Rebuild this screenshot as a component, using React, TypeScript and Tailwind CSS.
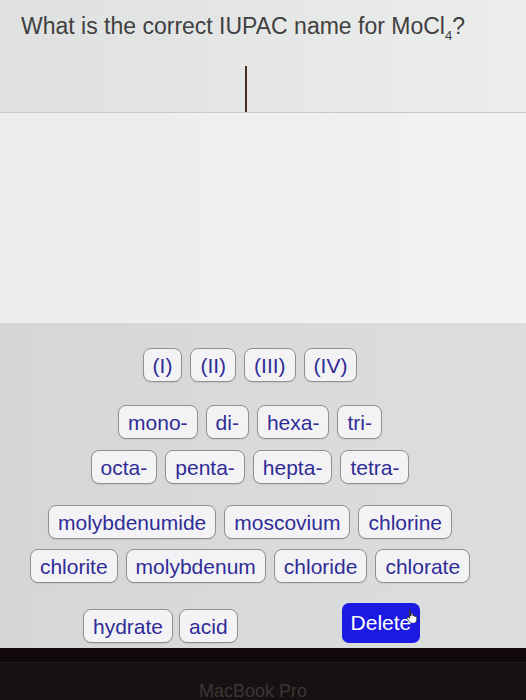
const numerals = ["(I)", "(II)", "(III)", "(IV)"];
const prefixesTop = ["mono-", "di-", "hexa-", "tri-"];
const prefixesBottom = ["octa-", "penta-", "hepta-", "tetra-"];
const namesTop = ["molybdenumide", "moscovium", "chlorine"];
const namesBottom = ["chlorite", "molybdenum", "chloride", "chlorate"];

const Chip = ({ label }: { label: string }) => (
  <button className="h-[34px] px-[9px] rounded-[8px] border border-[#8f9090] bg-[#f3f3f5] text-[21px] leading-none text-[#302c96] shadow-[0_1px_1px_rgba(0,0,0,0.08)]">
    {label}
  </button>
);

const ChipRow = ({ items }: { items: string[] }) => (
  <div className="flex justify-center gap-[8px]">
    {items.map((item) => (
      <Chip key={item} label={item} />
    ))}
  </div>
);

const HandCursor = () => (
  <svg width="12" height="14" viewBox="0 0 12 14" className="absolute right-[2px] top-[6px]">
    <path
      d="M3.5 1.2c.6 0 1 .4 1 1V7l.4-.1V5.6c0-.6.4-1 1-1s1 .4 1 1v1.5c.1-.5.5-.8 1-.8.6 0 1 .4 1 1v.6c.1-.4.5-.6.9-.6.6 0 1 .4 1 1v2.6c0 1.9-1.4 3.4-3.3 3.4H6.2c-1 0-1.9-.5-2.5-1.3L1.2 9.6c-.3-.5-.2-1.1.3-1.4.5-.3 1.1-.2 1.4.2l.6.8V2.2c0-.6.4-1 1-1z"
      fill="#ffffff"
      stroke="#1a1a1a"
      strokeWidth="0.8"
    />
  </svg>
);

const App = () => {
  return (
    <div className="w-[526px] h-[700px] overflow-hidden flex flex-col font-['Liberation_Sans',Arial,sans-serif]">
      <div className="h-[113px] bg-gradient-to-r from-[#dfe1e1] via-[#e5e7e7] to-[#eceeee] border-b border-[#c9cbcb] px-[21px] pt-[11px] relative">
        <h1 className="text-[23px] leading-[30px] text-[#404040]">
          What is the correct IUPAC name for MoCl<sub className="text-[13px] align-[-3px]">4</sub>?
        </h1>
        <div className="absolute left-[245px] top-[66px] w-[1.5px] h-[46px] bg-[#4a2c24]" />
      </div>

      <div className="h-[210px] bg-gradient-to-r from-[#ebeded] via-[#eef0f0] to-[#f1f3f3]" />

      <div className="flex-1 bg-gradient-to-r from-[#d5d7d7] via-[#d9dbdb] to-[#dcdede] pt-[25px] pr-[26px] flex flex-col">
        <ChipRow items={numerals} />

        <div className="mt-[23px] flex flex-col gap-[11px]">
          <ChipRow items={prefixesTop} />
          <ChipRow items={prefixesBottom} />
        </div>

        <div className="mt-[21px] flex flex-col gap-[10px]">
          <ChipRow items={namesTop} />
          <ChipRow items={namesBottom} />
        </div>

        <div className="mt-[19px] flex items-center pl-[83px]">
          <div className="flex gap-[6px] mt-[7px]">
            <Chip label="hydrate" />
            <Chip label="acid" />
          </div>
          <button className="relative ml-[104px] h-[40px] px-[9px] rounded-[7px] bg-[#1a1ae2] text-white text-[21px] leading-none">
            Delete
            <HandCursor />
          </button>
        </div>
      </div>

      <div className="h-[52px] bg-[#0d0808] flex flex-col">
        <div className="h-[20px] bg-[#110909] border-b border-[#1f1818]" />
        <div className="flex-1 bg-[#171111] flex justify-center pt-[19px] pr-[20px]">
          <span className="text-[18px] leading-none text-[#3b3636]">MacBook Pro</span>
        </div>
      </div>
    </div>
  );
};

export default App;
